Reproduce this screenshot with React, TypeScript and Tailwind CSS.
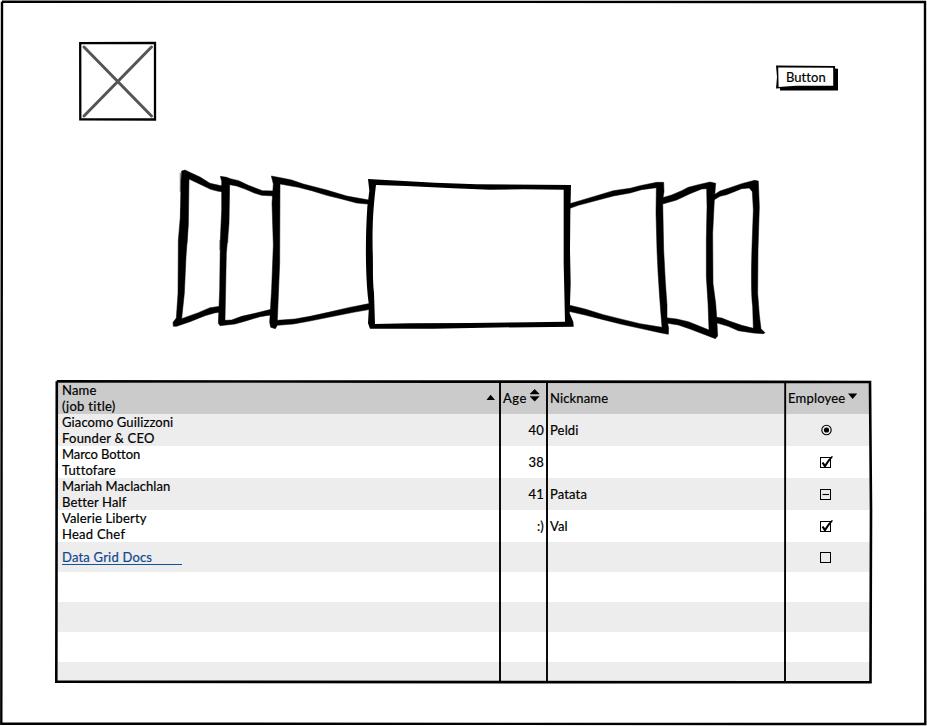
import type { ReactNode } from 'react';

type Mark = 'radio' | 'check' | 'minus' | 'empty' | 'none';

interface Line {
  text: string;
  spacing: string;
}

interface Row {
  name: Line[];
  age: string;
  nick: string;
  mark: Mark;
}

const rows: Row[] = [
  { name: [{ text: 'Giacomo Guilizzoni', spacing: 'tracking-[0.12px]' }, { text: 'Founder & CEO', spacing: 'tracking-[0.24px]' }], age: '40', nick: 'Peldi', mark: 'radio' },
  { name: [{ text: 'Marco Botton', spacing: 'tracking-[-0.08px]' }, { text: 'Tuttofare', spacing: 'tracking-[0.15px]' }], age: '38', nick: '', mark: 'check' },
  { name: [{ text: 'Mariah Maclachlan', spacing: 'tracking-[0.04px]' }, { text: 'Better Half', spacing: 'tracking-[0.15px]' }], age: '41', nick: 'Patata', mark: 'minus' },
  { name: [{ text: 'Valerie Liberty', spacing: 'tracking-[0.15px]' }, { text: 'Head Chef', spacing: 'tracking-[0.25px]' }], age: ':)', nick: 'Val', mark: 'check' },
];

const columns = 'grid grid-cols-[442px_47px_238px_85px]';

function MarkIcon({ mark }: { mark: Mark }) {
  if (mark === 'none') return null;
  return (
    <svg width="16" height="16" viewBox="0 0 16 16" fill="none" stroke="#000">
      {mark === 'radio' ? (
        <>
          <circle cx="8.5" cy="8" r="4.7" strokeWidth="1.1" />
          <circle cx="8.5" cy="8" r="2.6" fill="#000" stroke="none" />
        </>
      ) : (
        <rect x="2.5" y="3.5" width="10" height="10" strokeWidth="1" />
      )}
      {mark === 'check' && <path d="M3.6 9L5.4 8L7 10.2C9 7 11 4.5 13.8 2L15 2.8C12.2 6 9.8 9.4 7.7 13L6.2 13Z" fill="#000" stroke="none" />}
      {mark === 'minus' && <path d="M4.5 8.5H11" strokeWidth="1.1" />}
    </svg>
  );
}

function Cells({ children, className }: { children: ReactNode; className: string }) {
  return <div className={`${columns} ${className}`}>{children}</div>;
}

function Carousel() {
  return (
    <svg width="605" height="180" viewBox="0 0 1815 540" fill="#000">
      <g stroke="#000" strokeWidth="1.5" strokeLinejoin="round">
        <path d="M50 33L60 30L77 38L105 51L135 70L172 78V95L160 94L137 88L110 75L72 57L70 195L63 290L58 400L50 476L75 467L100 458L135 443L166 439V456L148 459L120 467L75 485L35 499L25 499L24 487L34 474L39 400L40 240L46 170L48 60Z" />
        <path d="M166 49L185 52L196 56L221 62L250 76L292 92L328 93V108L290 106L268 99L240 87L215 78L194 74L192 190L184 280L180 481L200 480L230 469L270 460L322 447V464L285 470L245 482L210 492L165 497L160 490L164 390L166 240L170 150L170 64Z" />
        <path d="M319 48L355 55L380 60L415 72L485 90L545 108L616 121V133L575 129L530 117L485 106L440 92L400 82L345 72L344 310L337 481L390 477L435 469L490 457L550 443L616 430V448L565 457L490 472L430 484L385 492L337 496L331 506L317 502L314 487L320 385L325 255L321 130L325 72Z" />
      </g>
      <g transform="translate(585 30)">
        <path fillRule="evenodd" d="M24 27L225 38L350 43L633 45L631 130L630 240L632 340L629 430L640 456L641 470L370 473L220 476H30L24 460L27 405C18 350 14 230 22 110L28 62ZM48 45C43 85 36 150 38 240C40 290 37 320 42 370L45 462L150 460L330 459L510 457L615 455L611 280V59L490 58L390 59L280 55L140 48Z" />
      </g>
      <g transform="translate(1185 30)" stroke="#000" strokeWidth="1.5" strokeLinejoin="round">
        <path d="M26 102L60 92L110 77L160 62L210 55L240 47L290 37L311 37L312 65L308 90L311 240L316 335L321 405L321 450L326 475L325 493L300 488L240 475L185 463L130 449L75 435L26 424V405L75 417L130 434L190 449L240 461L306 472C300 400 294 320 291 240L288 130L289 53L245 59L210 69L160 78L100 94L55 106L26 116Z" />
        <path d="M305 84L335 75L365 62L385 52L415 44L450 36L467 40L463 90L458 190L459 340L467 400L470 440L473 498L466 506L445 498L390 477L355 465L318 459V443L350 447L385 455L410 465L447 480L444 400L439 320V210L441 110L440 56L425 57L390 71L350 90L308 102Z" />
        <path d="M458 77L480 63L510 53L545 41L584 31L595 33L598 110L594 240L593 370L598 435L603 476L615 488L610 491L580 489L535 482L505 469L464 457V441L485 444L510 454L545 466L580 475L578 410C573 370 574 300 576 230L580 120L577 65L568 54L545 56L500 74L480 79L460 91Z" />
      </g>
      <path d="M46 38V95M47 145V175M66 190V250M188 185V248M165 240V270" fill="none" stroke="#000" strokeOpacity=".4" strokeWidth="4" />
    </svg>
  );
}

function Frames() {
  return (
    <svg className="pointer-events-none absolute left-0 top-0" width="927" height="726" viewBox="0 0 927 726" fill="none" stroke="#000">
      <path d="M2 1.8L925 2L925.3 724L1.3 723.7L2 1.8" strokeWidth="2.4" />
      <path d="M56.8 381.3L450 381.6L870 382L871 510L870.5 682.3L56.3 681.8L56.8 381.3" strokeWidth="2.6" />
      <path d="M500 382V682M547 382V682M785.2 382L785 682" strokeWidth="1.9" />
    </svg>
  );
}

export default function App() {
  return (
    <main className="relative h-[726px] w-[927px] overflow-hidden bg-white font-['Lato','Noto_Sans',sans-serif] text-[13px] leading-4 text-black [-webkit-text-stroke:0.2px]">
      <header className="flex h-[160px] justify-between pl-[78px] pr-[88px] pt-[41px]">
        <svg width="79" height="80" viewBox="0 0 79 80" fill="none">
          <path d="M2.2 2.2L77 2L77 78.5L2.3 78.4Z" stroke="#000" strokeWidth="2.3" />
          <path d="M6 6L73.5 75M73.5 6L6 75" stroke="#555" strokeWidth="3" strokeLinecap="round" />
        </svg>
        <button className="relative mt-6 flex h-[27px] w-[63px]">
          <svg className="absolute left-0 top-0" width="63" height="27" viewBox="0 0 63 27">
            <path d="M0 .5L59 1V3.4L62 3.8V25.5H4V23.3L0 23.5L1 12Z" fill="#000" />
            <path d="M2.2 2.5L57.2 2.7V20.7L20 20.8L2.6 22Z" fill="#fff" />
          </svg>
          <span className="relative ml-[10px] mt-[4px] whitespace-nowrap tracking-[0.05px]">Button</span>
        </button>
      </header>

      <section className="h-[223px] pl-[165px]">
        <Carousel />
      </section>

      <section className="ml-[58px] flex h-[298px] w-[812px] flex-col overflow-hidden">
        <Cells className="h-[31px] shrink-0 bg-[#cbcbcb]">
          <div className="flex items-start justify-between pl-1 pr-[4px]">
            <div className="-mt-px h-8 whitespace-nowrap">
              <div className="tracking-[0.2px]">Name</div>
              <div className="tracking-[0.3px]">(job title)</div>
            </div>
            <svg className="mt-[11px]" width="10" height="7" viewBox="0 0 10 7"><path d="M.5 6L4.6 .7L9 6Z" /></svg>
          </div>
          <div className="flex items-start pl-[3px] pt-[7px]">
            <span className="w-[27px] whitespace-nowrap tracking-[0.5px]">Age</span>
            <svg className="-mt-px" width="10" height="13" viewBox="0 0 10 13"><path d="M0 5L4.7 .3L9.2 5ZM0 7.4H9.2L4.7 12.2Z" stroke="#000" strokeWidth=".5" /></svg>
          </div>
          <div className="flex items-start pl-[3px] pt-[7px]"><span className="tracking-[0.15px]">Nickname</span></div>
          <div className="flex items-start pl-[3px] pt-[7px]">
            <span className="w-[60px] whitespace-nowrap tracking-[0.2px]">Employee</span>
            <svg className="mt-[3px]" width="10" height="7" viewBox="0 0 10 7"><path d="M0 .5H9.2L4.7 6Z" /></svg>
          </div>
        </Cells>

        {rows.map((row, index) => (
          <Cells key={row.name[0].text} className={`h-8 shrink-0 ${index % 2 === 0 ? 'bg-[#ededed]' : 'bg-white'}`}>
            <div className="pl-1">
              {row.name.map((line) => (
                <div key={line.text}><span className={line.spacing}>{line.text}</span></div>
              ))}
            </div>
            <div className="flex items-center justify-end pr-[3px] tracking-[0.2px]">{row.age}</div>
            <div className="flex items-center pl-[3px]"><span className="tracking-[0.15px]">{row.nick}</span></div>
            <div className="flex items-center pl-[33px]"><MarkIcon mark={row.mark} /></div>
          </Cells>
        ))}

        <Cells className="h-[30px] shrink-0 bg-[#ededed]">
          <div className="pl-1 pt-[7px]">
            <a className="block h-4 w-[120px] border-b border-[#12549a] text-[#12468f]"><span className="tracking-[0.2px]">Data Grid Docs</span></a>
          </div>
          <div />
          <div />
          <div className="pl-[33px] pt-[7px]"><MarkIcon mark="empty" /></div>
        </Cells>
        <div className="h-[30px] shrink-0 bg-white" />
        <div className="h-[30px] shrink-0 bg-[#ededed]" />
        <div className="h-[30px] shrink-0 bg-white" />
        <div className="h-5 shrink-0 bg-[#ededed]" />
      </section>
      <Frames />
    </main>
  );
}
